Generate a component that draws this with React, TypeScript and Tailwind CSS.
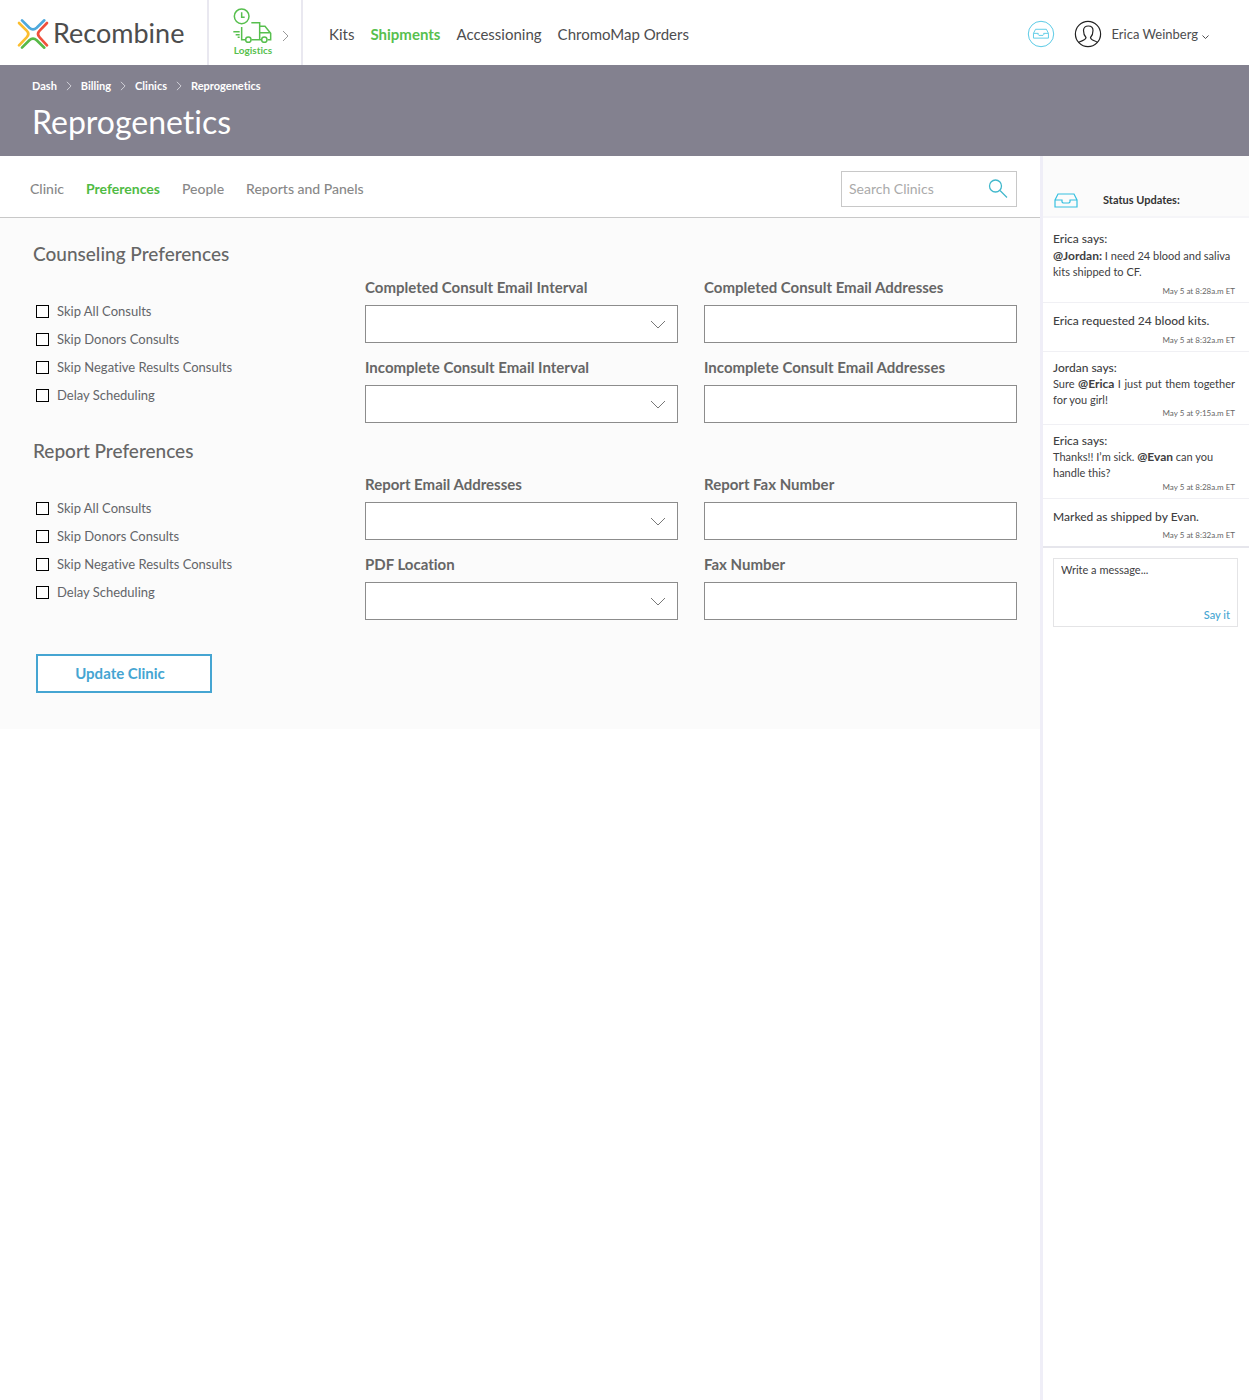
import React, { ReactNode, useId } from "react";

function Chevron({ className, down = false }: { className: string; down?: boolean }) {
  return (
    <svg viewBox={down ? "0 0 16 9" : "0 0 7 12"} className={className} fill="none" stroke="currentColor" aria-hidden="true">
      <path d={down ? "M1 1L8 8L15 1" : "M1 1L6 6L1 11"} vectorEffect="non-scaling-stroke" />
    </svg>
  );
}

function LogoMark() {
  return (
    <svg viewBox="0 0 96 96" className="h-8 w-8 shrink-0" fill="none" strokeWidth="8" strokeLinecap="round" aria-hidden="true">
      <path stroke="#4ea9dc" d="M15 7L37 29Q48 39 59 29L82 7" />
      <path stroke="#f0503c" d="M90 15L68 38Q58 48 68 58L90 82" />
      <path stroke="#57b947" d="M15 89L37 67Q48 57 59 67L82 89" />
      <path stroke="#fbbd2e" d="M6 15L29 38Q39 48 29 58L6 82" />
    </svg>
  );
}

function TruckIcon() {
  return (
    <svg viewBox="0 0 120 108" className="h-9 w-10" fill="none" stroke="#57bf4e" strokeWidth="4.5" aria-hidden="true">
      <circle cx="26" cy="25" r="22" />
      <path d="M26 13V28H35" />
      <path d="M55 44H80V95M26 57V95H38M55 95H86M80 55H96L102 62L113 76V95H104M80 74H111" />
      <circle cx="46" cy="95" r="8" />
      <circle cx="94" cy="95" r="8" />
      <path d="M1 71H20M8 80H20M14 88H20" />
    </svg>
  );
}

function TrayPaths() {
  return <path d="M1 7L4 1H20L23 7V14H1ZM1 7H8V9L9 10H15L16 9V7H23" />;
}

const navLinks = ["Kits", "Shipments", "Accessioning", "ChromoMap Orders"];
const crumbs = ["Dash", "Billing", "Clinics", "Reprogenetics"];
const tabs = ["Clinic", "Preferences", "People", "Reports and Panels"];
const options = ["Skip All Consults", "Skip Donors Consults", "Skip Negative Results Consults", "Delay Scheduling"];

function Header() {
  return (
    <header className="flex h-[65px] items-stretch bg-white text-[#4d4d4f]">
      <a href="#" className="flex w-[207px] shrink-0 items-center pt-0.5 pl-[17px] text-[27px] text-[#4d4d4d]">
        <LogoMark />
        <span className="pl-1">Recombine</span>
      </a>
      <a href="#" className="flex w-24 shrink-0 items-start justify-between border-x-2 border-[#e9e8f0] pt-2 pr-3 pl-6">
        <span className="flex flex-col items-center text-[10px] leading-3 font-bold text-[#57bf4e]">
          <TruckIcon />
          Logistics
        </span>
        <Chevron className="mt-[22px] h-3 w-[7px] text-[#999]" />
      </a>
      <nav className="flex items-center gap-4 pt-1 pl-[26px] text-[15px]">
        {navLinks.map((label) => (
          <a key={label} href="#" className={label === "Shipments" ? "font-bold text-[#57bf4e]" : ""}>
            {label}
          </a>
        ))}
      </nav>
      <div className="ml-auto flex items-center pt-0.5 pr-10 text-[13px]">
        <button type="button" aria-label="Inbox">
          <svg viewBox="0 0 28 28" className="h-7 w-7" fill="none" stroke="#5ccbe6" aria-hidden="true">
            <circle cx="14" cy="14" r="12.7" />
            <g transform="translate(5.8 8.6) scale(.68)" strokeWidth="1.4">
              <TrayPaths />
            </g>
          </svg>
        </button>
        <button type="button" className="ml-[19px] flex items-center">
          <svg viewBox="0 0 28 28" className="h-7 w-7" fill="none" stroke="#222" strokeWidth="1.2" aria-hidden="true">
            <circle cx="14" cy="14" r="12.6" />
            <path d="M4.5 22.5C7 20.5 12 20.5 12 17.5C10 15.500 9.500 13 9.500 10.500C9.500 7.500 11.500 6 14.300 6C17.500 6 19 8 19 10.500C19 13 18.500 15.500 16.500 17.500C16.500 20.500 21.500 20.500 23.500 22.500" />
          </svg>
          <span className="pt-0.5 pr-1 pl-2.5">Erica Weinberg</span>
          <Chevron down className="mt-1.5 h-1 w-[7px]" />
        </button>
      </div>
    </header>
  );
}

function Checklist({ title }: { title: string }) {
  return (
    <div role="group" aria-label={title} className="mt-5 pl-[3px]">
      {options.map((label) => (
        <label key={label} className="flex h-7 items-center gap-2 text-[13px] leading-5 text-[#636569]">
          <input type="checkbox" className="h-[13px] w-[13px] shrink-0 appearance-none border border-black bg-white checked:bg-black" />
          {label}
        </label>
      ))}
    </div>
  );
}

function Field({ label, select = false }: { label: string; select?: boolean }) {
  const id = useId();
  const box = "block h-[38px] w-full appearance-none rounded-none border border-[#8c8c8c] bg-white px-2 text-sm";
  return (
    <div>
      <label htmlFor={id} className="block text-[15px] leading-5 font-bold text-[#666]">
        {label}
      </label>
      <div className="relative mt-2">
        {select ? (
          <>
            <select id={id} className={box}>
              <option value="" />
            </select>
            <Chevron down className="pointer-events-none absolute top-[15px] right-3 h-[9px] w-4 text-[#777]" />
          </>
        ) : (
          <input id={id} type="text" className={box} />
        )}
      </div>
    </div>
  );
}

function Section({ title, children }: { title: string; children: ReactNode }) {
  return (
    <section>
      <h2 className="mb-[9px] text-[19px] leading-7 font-medium text-[#666]">{title}</h2>
      <div className="grid grid-cols-[306px_1fr_1fr] items-start gap-x-[26px]">
        <Checklist title={title} />
        <div className="col-span-2 grid grid-cols-2 gap-x-[26px] gap-y-[14px]">{children}</div>
      </div>
    </section>
  );
}

function Stamp({ children }: { children: ReactNode }) {
  return <time className="mt-auto block text-right text-[8px] leading-[10px] text-[#666]">{children}</time>;
}

function Entry({ size, children }: { size: string; children: ReactNode }) {
  return <li className={`flex flex-col border-b border-[#f0f0f4] pr-[14px] pb-[6px] pl-2.5 last:border-b-0 ${size}`}>{children}</li>;
}

function Updates() {
  return (
    <aside className="w-[209px] shrink-0 border-l-[3px] border-[#efeef7] bg-white text-[11px] leading-4 text-[#404042]">
      <div className="flex h-[62px] items-end gap-[25px] border-b-2 border-[#f5f5f8] bg-[#fbfbfb] pb-2 pl-[11px]">
        <svg viewBox="0 0 24 15" className="h-[15px] w-6" fill="none" stroke="#36c0e0" strokeWidth="1.2" aria-hidden="true">
          <TrayPaths />
        </svg>
        <h2 className="font-bold text-[#333]">Status Updates:</h2>
      </div>
      <ul>
        <Entry size="min-h-[85px] pt-3">
          <p className="text-xs leading-[18px] font-medium">Erica says:</p>
          <p><b className="text-xs leading-4">@Jordan:</b> I need 24 blood and saliva kits shipped to CF.</p>
          <Stamp>May 5 at 8:28a.m ET</Stamp>
        </Entry>
        <Entry size="min-h-[49px] pt-2.5">
          <p className="text-xs leading-4 font-medium">Erica requested 24 blood kits.</p>
          <Stamp>May 5 at 8:32a.m ET</Stamp>
        </Entry>
        <Entry size="min-h-[73px] pt-2">
          <p className="text-xs leading-4 font-medium">Jordan says:</p>
          <p className="text-justify">Sure <b className="text-xs leading-4">@Erica</b> I just put them together for you girl!</p>
          <Stamp>May 5 at 9:15a.m ET</Stamp>
        </Entry>
        <Entry size="min-h-[74px] pt-2">
          <p className="text-xs leading-4 font-medium">Erica says:</p>
          <p>Thanks!! I’m sick. <b className="text-xs leading-4">@Evan</b> can you<br />handle this?</p>
          <Stamp>May 5 at 8:28a.m ET</Stamp>
        </Entry>
        <Entry size="min-h-[47px] pt-2.5">
          <p className="text-xs leading-4 font-medium">Marked as shipped by Evan.</p>
          <Stamp>May 5 at 8:32a.m ET</Stamp>
        </Entry>
      </ul>
      <form className="border-t-2 border-[#e6e6ec] pt-2.5 pr-[11px] pl-2.5">
        <div className="flex h-[69px] flex-col border border-[#e4e4e6] px-[7px] pt-[3px] pb-[3px]">
          <textarea aria-label="Write a message" placeholder="Write a message..." className="min-h-0 flex-1 resize-none outline-none placeholder:text-[#404042]" />
          <button type="button" className="self-end font-medium text-[#45a5d2]">Say it</button>
        </div>
      </form>
    </aside>
  );
}

export default function App() {
  return (
    <div className="flex min-h-screen flex-col bg-white font-['Lato',sans-serif] [font-variant-ligatures:none]">
      <Header />
      <div className="h-[91px] bg-[#83818f] pl-8 text-white">
        <nav aria-label="Breadcrumb" className="flex items-center pt-[13px] text-[11px] leading-4 font-bold">
          {crumbs.map((crumb, i) => (
            <React.Fragment key={crumb}>
              {i > 0 && <Chevron className="mx-[9px] h-2.5 w-1.5 text-[#d0cfd6]" />}
              <a href="#">{crumb}</a>
            </React.Fragment>
          ))}
        </nav>
        <h1 className="pt-2 text-[32px] leading-10">Reprogenetics</h1>
      </div>
      <div className="flex flex-1">
        <main className="min-w-0 flex-1">
          <div className="flex h-[62px] items-center justify-between border-b border-[#c8c8c8] pr-[23px] pl-[30px]">
            <nav className="flex gap-[22px] pt-1 text-sm font-medium text-[#888]">
              {tabs.map((tab) => (
                <a key={tab} href="#" className={tab === "Preferences" ? "font-bold text-[#4fbb44]" : ""}>
                  {tab}
                </a>
              ))}
            </nav>
            <div className="mt-1 flex h-9 w-44 items-center border border-[#c8c8c8] px-[7px]">
              <input type="search" aria-label="Search Clinics" placeholder="Search Clinics" className="min-w-0 flex-1 text-sm outline-none placeholder:text-[#aaa]" />
              <svg viewBox="0 0 20 20" className="mr-px h-5 w-5 shrink-0" fill="none" stroke="#41b8cc" strokeWidth="1.3" aria-hidden="true">
                <circle cx="7.500" cy="7" r="6" />
                <path d="M12 11.500L19 18.500" />
              </svg>
            </div>
          </div>
          <form className="flex flex-col gap-[14px] bg-[#fbfbfb] pt-[22px] pr-[23px] pb-9 pl-[33px]">
            <Section title="Counseling Preferences">
              <Field select label="Completed Consult Email Interval" />
              <Field label="Completed Consult Email Addresses" />
              <Field select label="Incomplete Consult Email Interval" />
              <Field label="Incomplete Consult Email Addresses" />
            </Section>
            <Section title="Report Preferences">
              <Field select label="Report Email Addresses" />
              <Field label="Report Fax Number" />
              <Field select label="PDF Location" />
              <Field label="Fax Number" />
            </Section>
            <button type="button" className="mt-5 ml-[3px] h-[39px] w-44 border-2 border-[#45a5d2] bg-white pr-2 text-[15px] font-bold text-[#45a5d2]">
              Update Clinic
            </button>
          </form>
        </main>
        <Updates />
      </div>
    </div>
  );
}
